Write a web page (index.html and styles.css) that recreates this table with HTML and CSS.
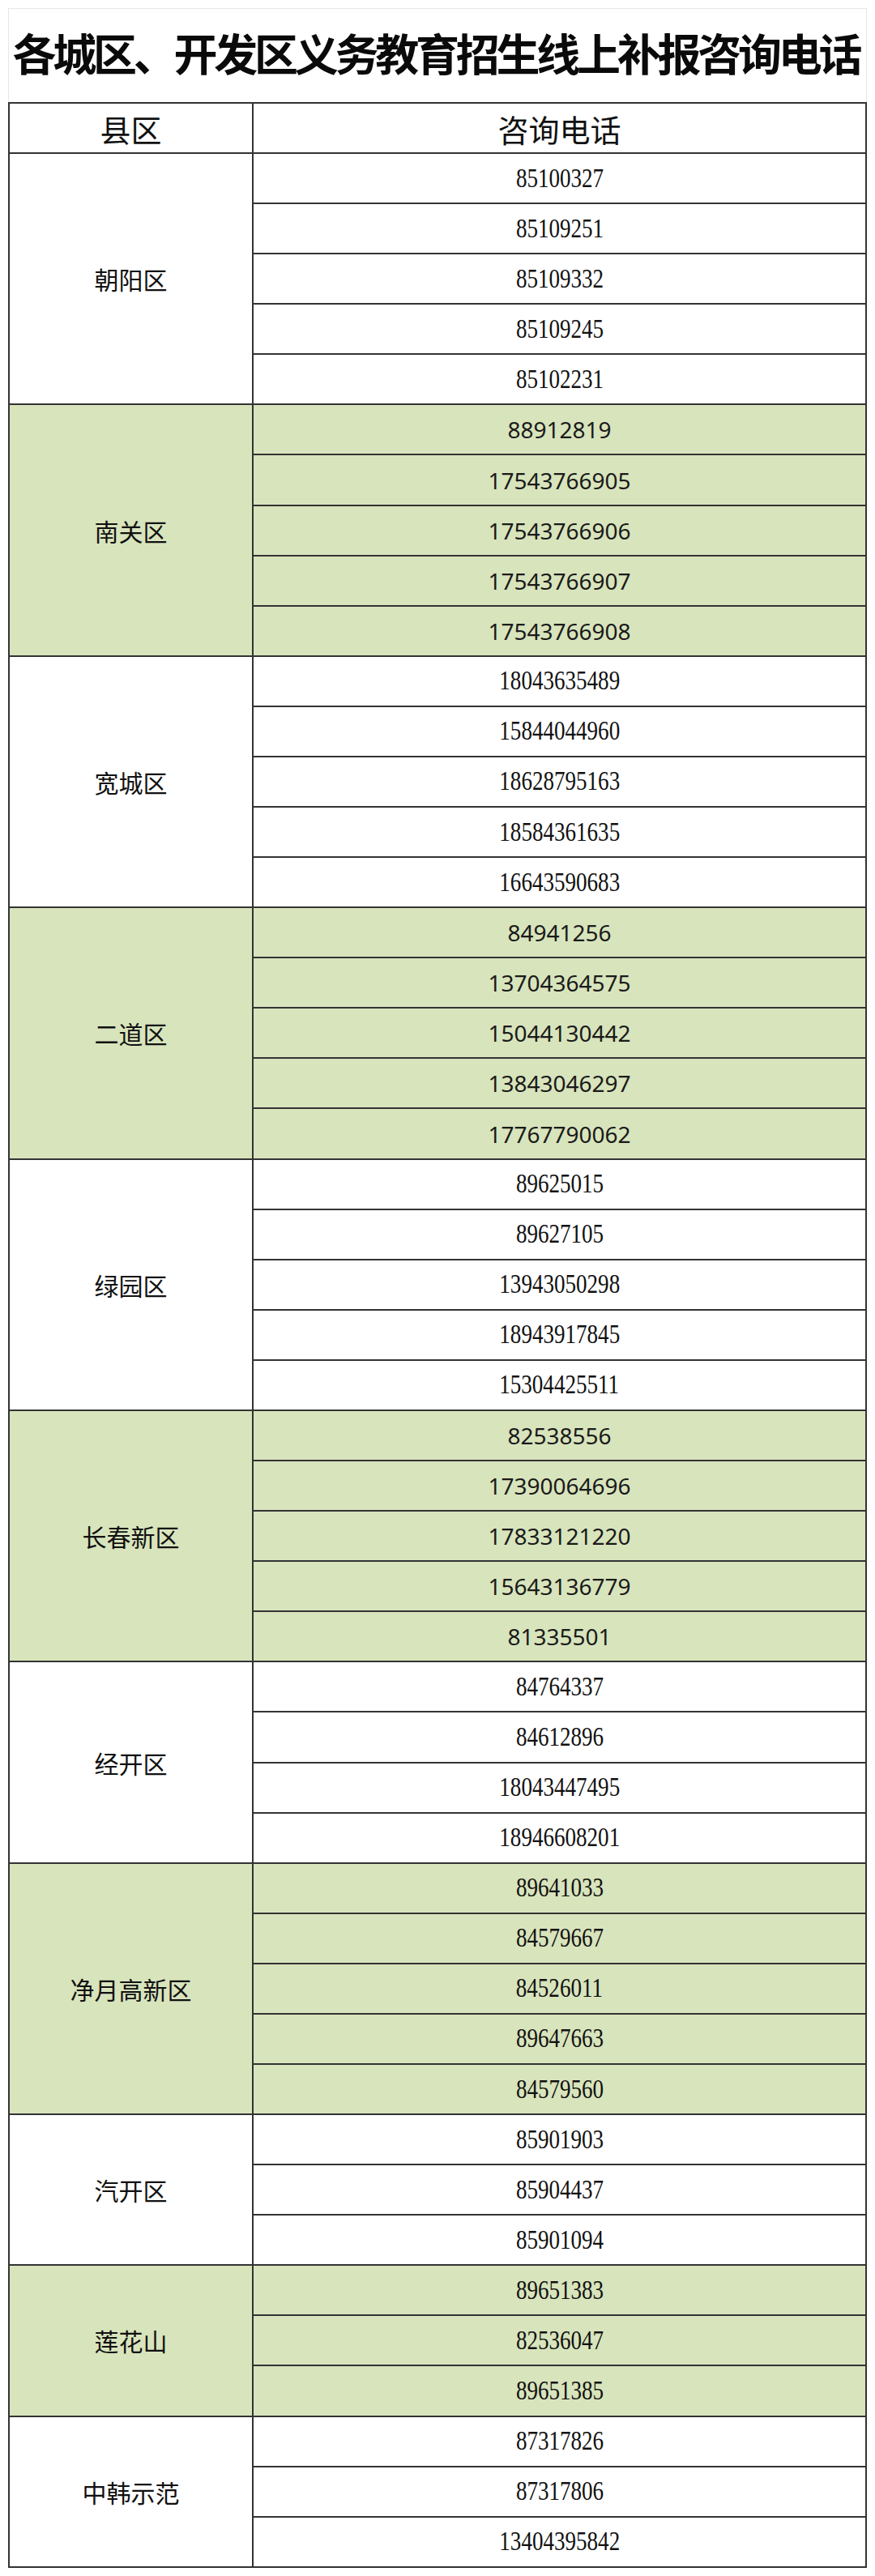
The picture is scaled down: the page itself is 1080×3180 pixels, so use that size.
FILE: index.html
```html
<!DOCTYPE html>
<html lang="zh-CN">
<head>
<meta charset="utf-8">
<title>各城区、开发区义务教育招生线上补报咨询电话</title>
<link rel="stylesheet" href="styles.css">
</head>
<body>
<div class="sheet">
  <div class="title"><span class="title-text">各城区、开发区义务教育招生线上补报咨询电话</span></div>
  <div class="table">
    <div class="head">
      <div class="hcell col1">县区</div>
      <div class="hcell">咨询电话</div>
    </div>

    <div class="group">
      <div class="district">朝阳区</div>
      <div class="phones serif">
        <div class="phone"><span>85100327</span></div>
        <div class="phone"><span>85109251</span></div>
        <div class="phone"><span>85109332</span></div>
        <div class="phone"><span>85109245</span></div>
        <div class="phone"><span>85102231</span></div>
      </div>
    </div>

    <div class="group green">
      <div class="district">南关区</div>
      <div class="phones sans">
        <div class="phone"><span>88912819</span></div>
        <div class="phone"><span>17543766905</span></div>
        <div class="phone"><span>17543766906</span></div>
        <div class="phone"><span>17543766907</span></div>
        <div class="phone"><span>17543766908</span></div>
      </div>
    </div>

    <div class="group">
      <div class="district">宽城区</div>
      <div class="phones serif">
        <div class="phone"><span>18043635489</span></div>
        <div class="phone"><span>15844044960</span></div>
        <div class="phone"><span>18628795163</span></div>
        <div class="phone"><span>18584361635</span></div>
        <div class="phone"><span>16643590683</span></div>
      </div>
    </div>

    <div class="group green">
      <div class="district">二道区</div>
      <div class="phones sans">
        <div class="phone"><span>84941256</span></div>
        <div class="phone"><span>13704364575</span></div>
        <div class="phone"><span>15044130442</span></div>
        <div class="phone"><span>13843046297</span></div>
        <div class="phone"><span>17767790062</span></div>
      </div>
    </div>

    <div class="group">
      <div class="district">绿园区</div>
      <div class="phones serif">
        <div class="phone"><span>89625015</span></div>
        <div class="phone"><span>89627105</span></div>
        <div class="phone"><span>13943050298</span></div>
        <div class="phone"><span>18943917845</span></div>
        <div class="phone"><span>15304425511</span></div>
      </div>
    </div>

    <div class="group green">
      <div class="district">长春新区</div>
      <div class="phones sans">
        <div class="phone"><span>82538556</span></div>
        <div class="phone"><span>17390064696</span></div>
        <div class="phone"><span>17833121220</span></div>
        <div class="phone"><span>15643136779</span></div>
        <div class="phone"><span>81335501</span></div>
      </div>
    </div>

    <div class="group">
      <div class="district">经开区</div>
      <div class="phones serif">
        <div class="phone"><span>84764337</span></div>
        <div class="phone"><span>84612896</span></div>
        <div class="phone"><span>18043447495</span></div>
        <div class="phone"><span>18946608201</span></div>
      </div>
    </div>

    <div class="group green">
      <div class="district">净月高新区</div>
      <div class="phones serif">
        <div class="phone"><span>89641033</span></div>
        <div class="phone"><span>84579667</span></div>
        <div class="phone"><span>84526011</span></div>
        <div class="phone"><span>89647663</span></div>
        <div class="phone"><span>84579560</span></div>
      </div>
    </div>

    <div class="group">
      <div class="district">汽开区</div>
      <div class="phones serif">
        <div class="phone"><span>85901903</span></div>
        <div class="phone"><span>85904437</span></div>
        <div class="phone"><span>85901094</span></div>
      </div>
    </div>

    <div class="group green">
      <div class="district">莲花山</div>
      <div class="phones serif">
        <div class="phone"><span>89651383</span></div>
        <div class="phone"><span>82536047</span></div>
        <div class="phone"><span>89651385</span></div>
      </div>
    </div>

    <div class="group">
      <div class="district">中韩示范</div>
      <div class="phones serif">
        <div class="phone"><span>87317826</span></div>
        <div class="phone"><span>87317806</span></div>
        <div class="phone"><span>13404395842</span></div>
      </div>
    </div>
  </div>
</div>
<script src="fit.js"></script>
</body>
</html>
```

FILE: fit.js
```js
(function () {
  function fit() {
    var t = document.querySelector('.title-text');
    if (!t) return;
    t.style.letterSpacing = '0px';
    var w = t.getBoundingClientRect().width;
    var n = t.textContent.length;
    var target = 1045;
    var ls = (target - w) / n;
    t.style.letterSpacing = ls.toFixed(2) + 'px';
    t.style.marginRight = (-ls).toFixed(2) + 'px';
  }
  fit();
  window.addEventListener('load', fit);
})();
```

FILE: styles.css
```css
* {
  box-sizing: border-box;
}

html, body {
  margin: 0;
  padding: 0;
  background: #ffffff;
}

body {
  color: #111111;
  font-family: "Noto Sans CJK SC", "Noto Sans", sans-serif;
}

.sheet {
  width: 1060px;
  margin: 10px 10px 0 10px;
}

.title {
  height: 116px;
  border: 1px solid #e6e6e6;
  border-bottom: none;
  display: flex;
  align-items: center;
  justify-content: center;
  padding-bottom: 8px;
  overflow: hidden;
}

.title-text {
  font-family: "Noto Sans CJK SC", sans-serif;
  font-size: 54px;
  font-weight: 700;
  letter-spacing: -6px;
  white-space: nowrap;
  color: #0a0a0a;
}

.table {
  border: 2px solid #333333;
  border-bottom: none;
}

.head {
  display: grid;
  grid-template-columns: 301px 1fr;
  height: 62px;
  border-bottom: 2px solid #333333;
}

.hcell {
  display: flex;
  align-items: center;
  justify-content: center;
  font-size: 38px;
  font-weight: 400;
  color: #111111;
}

.col1 {
  border-right: 2px solid #333333;
}

.group {
  display: grid;
  grid-template-columns: 301px 1fr;
  background: #ffffff;
}

.group.green {
  background: #d8e4bc;
}

.district {
  border-right: 2px solid #333333;
  border-bottom: 2px solid #333333;
  display: flex;
  align-items: center;
  justify-content: center;
  font-size: 30px;
  font-weight: 400;
  color: #111111;
}

.phones {
  display: flex;
  flex-direction: column;
}

.phone {
  height: 62.09px;
  border-bottom: 2px solid #333333;
  display: flex;
  align-items: center;
  justify-content: center;
}

.serif .phone span {
  display: inline-block;
  font-family: "Liberation Serif", "Times New Roman", serif;
  font-size: 33px;
  line-height: 1;
  transform: scaleX(0.82);
  color: #111111;
}

.sans .phone span {
  display: inline-block;
  font-family: "Noto Sans", "Open Sans", sans-serif;
  font-size: 28px;
  line-height: 1;
  color: #1a1a1a;
}
```
